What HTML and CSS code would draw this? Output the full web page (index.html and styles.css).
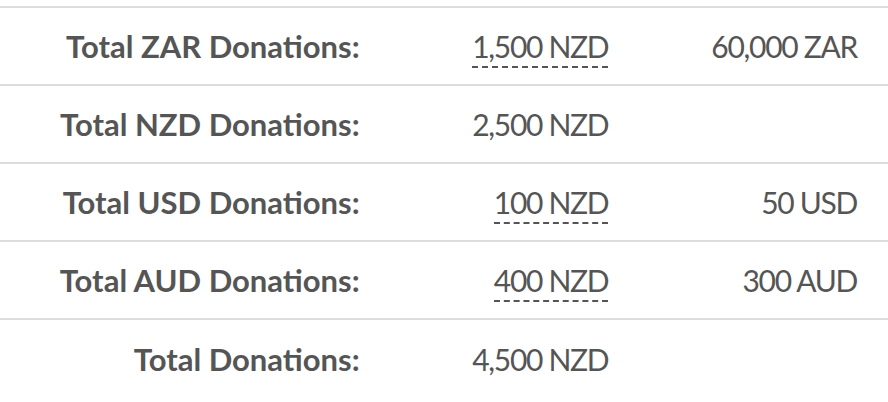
FILE: index.html
```html
<!DOCTYPE html>
<html>
<head>
<meta charset="utf-8">
<link rel="stylesheet" href="styles.css">
</head>
<body>
<div class="wrap">
<table class="totals">
  <tr>
    <th>Total ZAR Donations:</th>
    <td><span class="conv">1,500 NZD</span></td>
    <td>60,000 ZAR</td>
  </tr>
  <tr>
    <th>Total NZD Donations:</th>
    <td>2,500 NZD</td>
    <td></td>
  </tr>
  <tr>
    <th>Total USD Donations:</th>
    <td><span class="conv">100 NZD</span></td>
    <td>50 USD</td>
  </tr>
  <tr>
    <th>Total AUD Donations:</th>
    <td><span class="conv">400 NZD</span></td>
    <td>300 AUD</td>
  </tr>
  <tr>
    <th>Total Donations:</th>
    <td>4,500 NZD</td>
    <td></td>
  </tr>
</table>
</div>
</body>
</html>
```
FILE: styles.css
```css
html, body {
  margin: 0;
  padding: 0;
  background: #fff;
}
.wrap {
  padding-top: 6px;
}
.totals {
  width: 100%;
  border-collapse: collapse;
  font-family: "Lato", "Open Sans", sans-serif;
  color: #555;
}
.totals tr {
  border-top: 2px solid #ddd;
}
.totals th, .totals td {
  height: 78px;
  box-sizing: border-box;
  padding: 0 31px 0 0;
  text-align: right;
  vertical-align: middle;
}
.totals th {
  width: 44%;
  font-size: 31px;
  font-weight: 700;
}
.totals td {
  width: 28%;
  font-size: 30px;
  font-weight: 400;
  letter-spacing: -1.3px;
}
.conv {
  border-bottom: 2px dashed #555;
  padding-bottom: 2px;
}
```
